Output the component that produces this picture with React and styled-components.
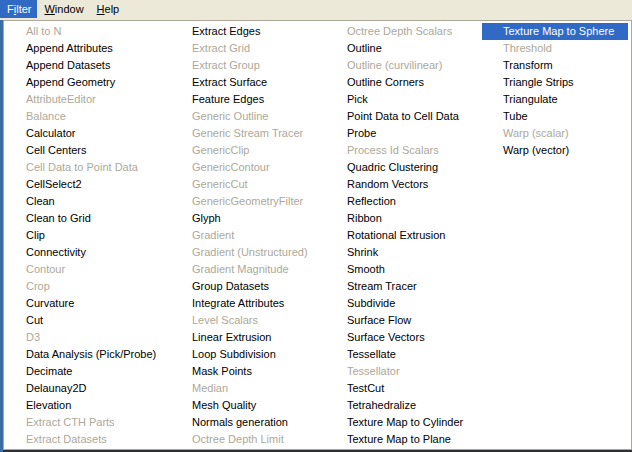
import React from 'react';
import styled, { createGlobalStyle } from 'styled-components';

const GlobalStyle = createGlobalStyle`
  html, body {
    margin: 0;
    padding: 0;
    width: 632px;
    height: 452px;
    overflow: hidden;
    background: #2e2f33;
  }
`;

const Page = styled.div`
  width: 632px;
  height: 452px;
  display: flex;
  flex-direction: column;
  font-family: "Liberation Sans", Arial, sans-serif;
  font-size: 11px;
  background: linear-gradient(to right, #3a6ea5 0 3px, #2e2f33 3px);
`;

const MenuBar = styled.div`
  height: 20px;
  display: flex;
  align-items: flex-start;
  background: #ece9d8;
`;

const MenuTitle = styled.div`
  height: 18px;
  line-height: 18px;
  padding: 0 6px 0 7px;
  color: ${({ $open }) => ($open ? '#ffffff' : '#000000')};
  background: ${({ $open }) => ($open ? '#316ac5' : 'transparent')};
`;

const Key = styled.span`
  text-decoration: underline;
  text-underline-offset: 1px;
`;

const Dropdown = styled.div`
  margin-left: 3px;
  width: 625px;
  height: 426px;
  padding: 2px 1px 0 1px;
  background: #ffffff;
  border: 1px solid #aca899;
  display: grid;
  grid-template-columns: 166px 155px 156px 146px;
  align-items: start;
`;

const Column = styled.div`
  display: flex;
  flex-direction: column;
`;

const Item = styled.div`
  height: 17px;
  line-height: 17px;
  padding-left: 21px;
  white-space: nowrap;
  color: ${({ $disabled, $active }) =>
    $active ? '#ffffff' : $disabled ? '#aca899' : '#000000'};
  background: ${({ $active }) => ($active ? '#316ac5' : 'transparent')};
`;

// "~" marks a greyed-out entry, "*" the highlighted one
const columns = [
  [
    '~All to N', 'Append Attributes', 'Append Datasets', 'Append Geometry',
    '~AttributeEditor', '~Balance', 'Calculator', 'Cell Centers',
    '~Cell Data to Point Data', 'CellSelect2', 'Clean', 'Clean to Grid', 'Clip',
    'Connectivity', '~Contour', '~Crop', 'Curvature', 'Cut', '~D3',
    'Data Analysis (Pick/Probe)', 'Decimate', 'Delaunay2D', 'Elevation',
    '~Extract CTH Parts', '~Extract Datasets',
  ],
  [
    'Extract Edges', '~Extract Grid', '~Extract Group', 'Extract Surface',
    'Feature Edges', '~Generic Outline', '~Generic Stream Tracer', '~GenericClip',
    '~GenericContour', '~GenericCut', '~GenericGeometryFilter', 'Glyph',
    '~Gradient', '~Gradient (Unstructured)', '~Gradient Magnitude',
    'Group Datasets', 'Integrate Attributes', '~Level Scalars',
    'Linear Extrusion', 'Loop Subdivision', 'Mask Points', '~Median',
    'Mesh Quality', 'Normals generation', '~Octree Depth Limit',
  ],
  [
    '~Octree Depth Scalars', 'Outline', '~Outline (curvilinear)',
    'Outline Corners', 'Pick', 'Point Data to Cell Data', 'Probe',
    '~Process Id Scalars', 'Quadric Clustering', 'Random Vectors', 'Reflection',
    'Ribbon', 'Rotational Extrusion', 'Shrink', 'Smooth', 'Stream Tracer',
    'Subdivide', 'Surface Flow', 'Surface Vectors', 'Tessellate',
    '~Tessellator', 'TestCut', 'Tetrahedralize', 'Texture Map to Cylinder',
    'Texture Map to Plane',
  ],
  [
    '*Texture Map to Sphere', '~Threshold', 'Transform', 'Triangle Strips',
    'Triangulate', 'Tube', '~Warp (scalar)', 'Warp (vector)',
  ],
];

const App = () => {
  return (
    <Page>
      <GlobalStyle />
      <MenuBar>
        <MenuTitle $open>
          F<Key>i</Key>lter
        </MenuTitle>
        <MenuTitle>
          <Key>W</Key>indow
        </MenuTitle>
        <MenuTitle>
          <Key>H</Key>elp
        </MenuTitle>
      </MenuBar>
      <Dropdown>
        {columns.map((col, c) => (
          <Column key={c}>
            {col.map((entry, i) => {
              const disabled = entry[0] === '~';
              const active = entry[0] === '*';
              const label = disabled || active ? entry.slice(1) : entry;
              return (
                <Item key={i} $disabled={disabled} $active={active}>
                  {label}
                </Item>
              );
            })}
          </Column>
        ))}
      </Dropdown>
    </Page>
  );
};

export default App;
